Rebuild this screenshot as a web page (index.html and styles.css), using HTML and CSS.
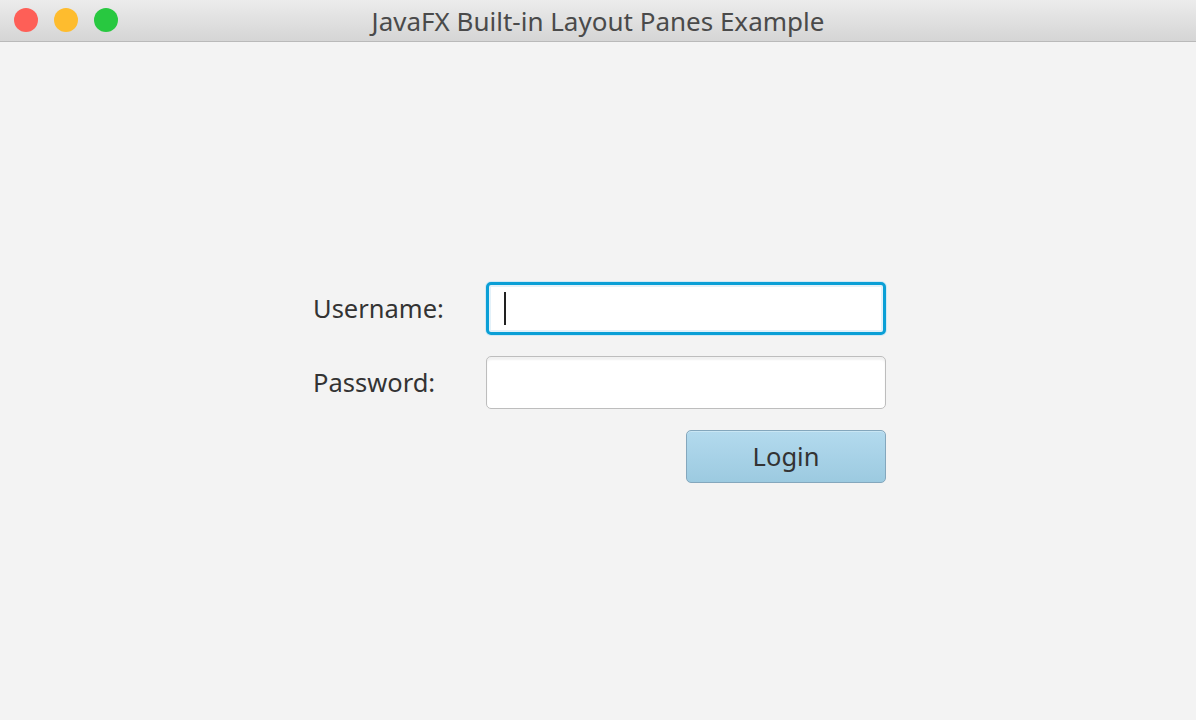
FILE: index.html
```html
<!DOCTYPE html>
<html lang="en">
<head>
  <meta charset="UTF-8" />
  <title>JavaFX Built-in Layout Panes Example</title>
  <link rel="stylesheet" href="styles.css">
</head>
<body>
  <div class="window">
    <div class="titlebar">
      <div class="lights">
        <span class="light red"></span>
        <span class="light yellow"></span>
        <span class="light green"></span>
      </div>
      <div class="title">JavaFX Built-in Layout Panes Example</div>
    </div>

    <main class="content">
      <form class="login-grid" onsubmit="return false">
        <label for="username">Username:</label>
        <div class="field focused" id="username"><span class="caret"></span></div>

        <label for="password">Password:</label>
        <div class="field" id="password"></div>

        <div></div>
        <div class="actions">
          <button type="button" class="login-button">Login</button>
        </div>
      </form>
    </main>
  </div>
</body>
</html>
```

FILE: styles.css
```css
html, body {
  margin: 0;
  padding: 0;
}
body {
  font-family: 'Noto Sans', 'Liberation Sans', sans-serif;
  color: #333;
  background: #f3f3f3;
}
.window {
  width: 1196px;
  height: 720px;
  display: flex;
  flex-direction: column;
}
.titlebar {
  position: relative;
  height: 41px;
  flex: none;
  background: linear-gradient(to bottom, #ececec, #d5d5d5);
  border-bottom: 1px solid #b9b9b9;
  display: flex;
  align-items: center;
  justify-content: center;
}
.lights {
  position: absolute;
  left: 14px;
  top: 8px;
  display: flex;
  gap: 16px;
}
.light {
  width: 24px;
  height: 24px;
  border-radius: 50%;
}
.red { background: #fe5f57; }
.yellow { background: #febc2e; }
.green { background: #28c840; }
.title {
  font-size: 26px;
  line-height: 30px;
  color: #4a4a4a;
  margin-top: 1px;
}
.content {
  flex: 1;
  display: flex;
  align-items: center;
  justify-content: center;
}
.login-grid {
  display: grid;
  grid-template-columns: 173px 400px;
  row-gap: 21px;
  align-items: center;
  margin-left: 3px;
  margin-top: 2px;
}
.login-grid label {
  font-size: 25.5px;
  line-height: 30px;
  color: #333;
}
.field {
  box-sizing: border-box;
  height: 53px;
  background: #fff;
  border: 1px solid #bdbdbd;
  border-radius: 5px;
  box-shadow: inset 0 3px 2px #f1f1f1;
  position: relative;
}
.field.focused {
  border: 3px solid #0a9fd6;
  box-shadow: 0 0 0 1px #d2e9f5, inset 0 0 0 2px #e3f1f9;
}
.caret {
  position: absolute;
  left: 15px;
  top: 7px;
  width: 2px;
  height: 33px;
  background: #222;
}
.actions {
  display: flex;
  justify-content: flex-end;
}
.login-button {
  width: 200px;
  height: 53px;
  font-family: inherit;
  font-size: 25.5px;
  color: #333;
  background: linear-gradient(to bottom, #b3daee, #9ccae0);
  border: 1px solid #84a7bd;
  border-radius: 5px;
  box-shadow: inset 0 1px 0 #c9e6f4;
  padding: 0;
  cursor: pointer;
}
```
